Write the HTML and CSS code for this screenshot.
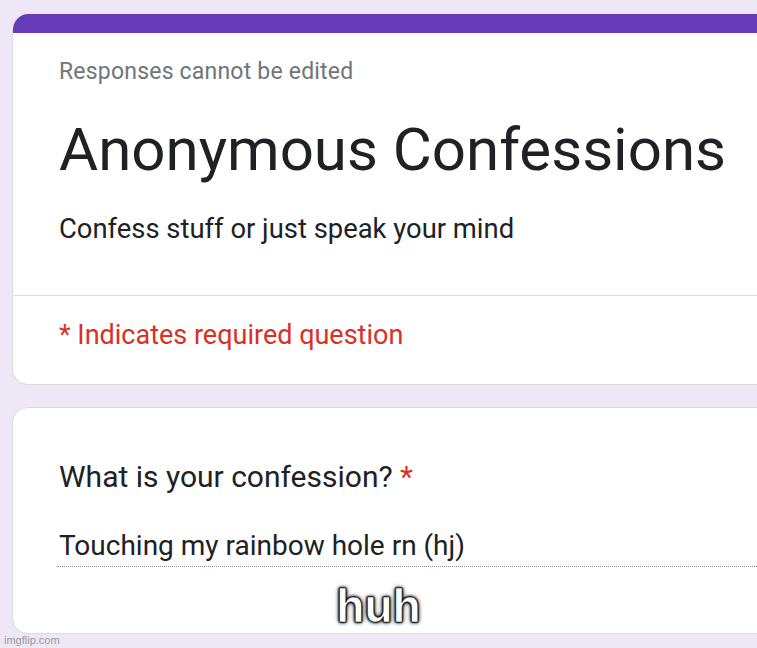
FILE: index.html
```html
<!DOCTYPE html>
<html>
<head>
<meta charset="utf-8">
<link rel="stylesheet" href="styles.css">
</head>
<body>
<div class="page">
  <div class="card card-head">
    <div class="head-bar"></div>
    <div class="head-body">
      <div class="note">Responses cannot be edited</div>
      <h1 class="title">Anonymous Confessions</h1>
      <div class="desc">Confess stuff or just speak your mind</div>
    </div>
    <div class="divider"></div>
    <div class="required">* Indicates required question</div>
  </div>
  <div class="card card-q">
    <div class="question">What is your confession? <span class="star">*</span></div>
    <div class="answer">Touching my rainbow hole rn (hj)</div>
  </div>
</div>
<div class="caption">huh</div>
<div class="watermark">imgflip.com</div>
</body>
</html>
```
FILE: styles.css
```css
html, body {
  margin: 0;
  padding: 0;
  width: 757px;
  height: 648px;
  overflow: hidden;
  background: #ede7f6;
  font-family: Roboto, "Noto Sans", sans-serif;
}
.page {
  padding: 14px 0 0 12px;
  display: flex;
  flex-direction: column;
  gap: 22px;
}
.card {
  width: 780px;
  background: #fff;
  border: 1px solid #dadce0;
  border-radius: 16px;
  box-sizing: border-box;
}
.card-head {
  border-top: none;
  overflow: hidden;
}
.head-bar {
  height: 19px;
  background: #673ab7;
}
.head-body {
  padding: 25px 0 0 46px;
}
.note {
  font-size: 23px;
  line-height: 28px;
  letter-spacing: 0.2px;
  color: #70757a;
}
.title {
  margin: 28px 0 0;
  font-size: 60px;
  font-weight: 400;
  line-height: 72px;
  color: #202124;
}
.desc {
  margin-top: 26px;
  font-size: 27.4px;
  line-height: 34px;
  color: #202124;
}
.divider {
  margin-top: 49px;
  height: 1px;
  background: #dadce0;
}
.required {
  margin: 22px 0 0 46px;
  padding-bottom: 32px;
  font-size: 27px;
  line-height: 34px;
  color: #d93025;
}
.card-q {
  height: 227px;
  padding: 51px 0 0 46px;
}
.question {
  font-size: 30px;
  line-height: 36px;
  color: #202124;
}
.star {
  color: #d93025;
}
.answer {
  margin: 34px -2px 0 -2px;
  padding: 0 0 3px 2px;
  font-size: 28px;
  line-height: 34px;
  color: #202124;
  border-bottom: 1px dotted #8a8a8a;
}
.caption {
  position: absolute;
  left: 0;
  right: 0;
  top: 581px;
  text-align: center;
  font-family: "Liberation Sans", Arial, sans-serif;
  font-weight: 700;
  font-size: 46px;
  line-height: 50px;
  color: #fff;
  -webkit-text-stroke: 0.6px #000;
  text-shadow: 0 0 2px #000, 0 0 2px #000, 0 0 3px #000, 0 0 5px #000;
}
.watermark {
  position: absolute;
  left: 4px;
  bottom: 2px;
  font-family: "Liberation Sans", Arial, sans-serif;
  font-size: 11px;
  color: #9a99a0;
}
```
